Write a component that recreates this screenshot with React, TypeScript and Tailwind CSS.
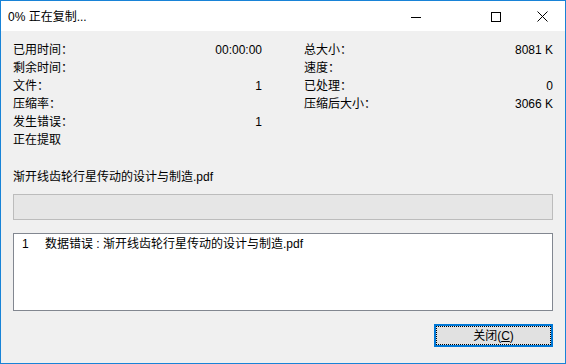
import React from 'react';

const font = { fontFamily: '"Liberation Sans", "Noto Sans CJK SC", sans-serif' };

// Row of a label and its right-aligned value
const StatRow: React.FC<{ label: string; value?: string }> = ({ label, value }) => (
  <div className="flex h-[18px] items-center justify-between">
    <span>{label}</span>
    <span>{value}</span>
  </div>
);

export default function App() {
  return (
    <div
      className="flex h-[364px] w-[566px] flex-col border border-[#1883d7] bg-[#f0f0f0] text-[12px] leading-[18px] text-black"
      style={font}
    >
      {/* Title bar */}
      <div className="flex h-[30px] shrink-0 items-center bg-white pl-[7px] pt-[1px]">
        <span className="flex-1">0% 正在复制...</span>
        <div className="flex h-full items-center">
          <div className="flex h-full w-[46px] items-center justify-center">
            <svg width="10" height="10" viewBox="0 0 10 10">
              <path d="M0 5.5H10" stroke="#000" strokeWidth="1" />
            </svg>
          </div>
          <div className="ml-[34px] flex h-full w-[46px] items-center justify-center">
            <svg width="10" height="10" viewBox="0 0 10 10">
              <rect x="0.5" y="0.5" width="9" height="9" fill="none" stroke="#000" strokeWidth="1" />
            </svg>
          </div>
          <div className="flex h-full w-[46px] items-center justify-center">
            <svg width="11" height="11" viewBox="0 0 11 11">
              <path d="M0.5 0.5L10.5 10.5M10.5 0.5L0.5 10.5" stroke="#000" strokeWidth="1" />
            </svg>
          </div>
        </div>
      </div>

      {/* Body */}
      <div className="flex flex-1 flex-col px-[12px] pt-[10px]">
        <div className="grid grid-cols-2 gap-x-[42px]">
          <div className="flex flex-col">
            <StatRow label="已用时间：" value="00:00:00" />
            <StatRow label="剩余时间：" />
            <StatRow label="文件：" value="1" />
            <StatRow label="压缩率：" />
            <StatRow label="发生错误：" value="1" />
            <StatRow label="正在提取" />
          </div>
          <div className="flex flex-col">
            <StatRow label="总大小：" value="8081 K" />
            <StatRow label="速度：" />
            <StatRow label="已处理：" value="0" />
            <StatRow label="压缩后大小：" value="3066 K" />
          </div>
        </div>

        <div className="mt-[19px] h-[18px]">渐开线齿轮行星传动的设计与制造.pdf</div>

        <div className="mt-[8px] h-[26px] border border-[#bcbcbc] bg-[#e6e6e6]" />

        <div className="mt-[13px] h-[78px] border border-[#828790] bg-white pl-[8px] pt-[1px]">
          <div className="flex h-[18px] items-center">
            <span className="w-[23px]">1</span>
            <span>数据错误 : 渐开线齿轮行星传动的设计与制造.pdf</span>
          </div>
        </div>

        <div className="mt-[13px] flex justify-end">
          <button className="h-[23px] w-[119px] border-2 border-[#0078d7] bg-[#e1e1e1] p-0">
            <div className="flex h-full w-full items-center justify-center border border-dotted border-black">
              关闭(<span className="underline">C</span>)
            </div>
          </button>
        </div>
      </div>
    </div>
  );
}
